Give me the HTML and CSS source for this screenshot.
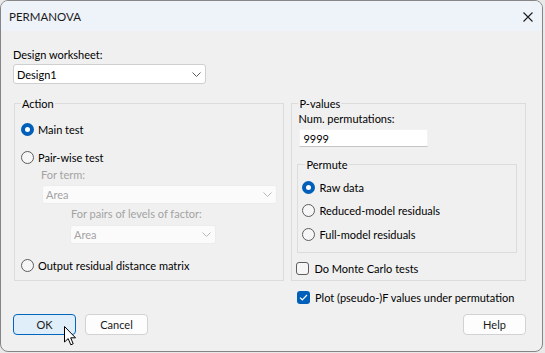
FILE: index.html
```html
<!DOCTYPE html>
<html lang="en">

<head>
  <meta charset="UTF-8">
  <meta name="viewport" content="width=device-width, initial-scale=1.0">
  <title>PERMANOVA</title>
  <link rel="stylesheet" href="styles.css">
</head>

<body>

  <div class="window">
    <div class="titlebar">
      <span class="title">PERMANOVA</span>
      <svg class="close" width="10" height="10" viewBox="0 0 10 10">
        <path d="M0.5 0.5 L9.5 9.5 M9.5 0.5 L0.5 9.5" stroke="#1b1b1b" stroke-width="1.1" fill="none" />
      </svg>
    </div>

    <div class="content">
      <div class="label">Design worksheet:</div>
      <div class="combo worksheet">
        <span>Design1</span>
        <svg width="9" height="5" viewBox="0 0 9 5"><path d="M0.5 0.5 L4.5 4.5 L8.5 0.5" stroke="#5c5c5c" fill="none" /></svg>
      </div>

      <div class="groups">
        <fieldset class="group action">
          <legend>Action</legend>
          <div class="option first"><span class="radio checked"></span>Main test</div>
          <div class="option"><span class="radio"></span>Pair-wise test</div>
          <div class="sub">
            <div class="label disabled">For term:</div>
            <div class="combo off term">
              <span>Area</span>
              <svg width="9" height="5" viewBox="0 0 9 5"><path d="M0.5 0.5 L4.5 4.5 L8.5 0.5" stroke="#b8b8b8" fill="none" /></svg>
            </div>
            <div class="subsub">
              <div class="label disabled">For pairs of levels of factor:</div>
              <div class="combo off pairs">
                <span>Area</span>
                <svg width="9" height="5" viewBox="0 0 9 5"><path d="M0.5 0.5 L4.5 4.5 L8.5 0.5" stroke="#b8b8b8" fill="none" /></svg>
              </div>
            </div>
          </div>
          <div class="option last"><span class="radio"></span>Output residual distance matrix</div>
        </fieldset>

        <fieldset class="group pvalues">
          <legend>P-values</legend>
          <div class="label">Num. permutations:</div>
          <div class="textbox">9999</div>
          <fieldset class="group permute">
            <legend>Permute</legend>
            <div class="option"><span class="radio checked"></span>Raw data</div>
            <div class="option"><span class="radio"></span>Reduced-model residuals</div>
            <div class="option"><span class="radio"></span>Full-model residuals</div>
          </fieldset>
          <div class="option check"><span class="box"></span>Do Monte Carlo tests</div>
        </fieldset>
      </div>

      <div class="option check plot">
        <span class="box checked">
          <svg width="9" height="7" viewBox="0 0 9 7"><path d="M1 3.6 L3.3 5.8 L8 1" stroke="#fff" stroke-width="1.2" fill="none" /></svg>
        </span>
        Plot (pseudo-)F values under permutation
      </div>

      <div class="buttons">
        <button class="btn default">OK</button>
        <button class="btn">Cancel</button>
        <span class="spacer"></span>
        <button class="btn">Help</button>
      </div>
    </div>

    <svg class="cursor" width="13" height="20" viewBox="0 0 13 20">
      <path d="M0.5 0.5 L0.5 16 L4.2 12.6 L6.8 18.8 L9.2 17.8 L6.7 11.8 L11.5 11.8 Z" fill="#fff" stroke="#000" stroke-width="1" stroke-linejoin="round" />
    </svg>
  </div>

</body>

</html>
```

FILE: styles.css
```css
body {
  margin: 0;
  background-color: #e9e9e9;
  font-family: 'Lato', 'Liberation Sans', sans-serif;
  font-size: 11px;
  color: #000;
}

.window {
  position: relative;
  width: 541px;
  height: 350px;
  border: 1px solid #858585;
  border-radius: 8px;
  overflow: hidden;
  background-color: #f0f0f0;
}

.titlebar {
  height: 30px;
  display: flex;
  align-items: center;
  justify-content: space-between;
  padding: 0 9px 0 8px;
  background-color: #eef2f9;
}

.title {
  font-size: 11.5px;
  color: #1a1a1a;
  margin-top: 1px;
}

.close {
  margin-top: 1px;
}

.content {
  padding: 16px 16px 0 12px;
}

.label {
  line-height: 16px;
  height: 16px;
  white-space: nowrap;
}

.disabled {
  color: #a3a3a3;
}

.combo {
  display: flex;
  align-items: center;
  justify-content: space-between;
  box-sizing: border-box;
  height: 20px;
  padding: 0 4px 0 3px;
  border: 1px solid #cfcfcf;
  border-radius: 3px;
  background-color: #fff;
}

.worksheet {
  width: 193px;
  margin-top: 1px;
}

.combo.off {
  background-color: #fbfbfb;
  border-color: #ececec;
  color: #a3a3a3;
  height: 19px;
}

.term {
  width: 235px;
  margin-top: 2px;
  margin-left: 1px;
}

.subsub {
  margin-left: 30px;
  margin-top: 2px;
}

.pairs {
  width: 146px;
  margin-top: 3px;
  margin-left: -1px;
}

.sub {
  margin-left: 20px;
}

.groups {
  display: flex;
  gap: 7px;
  margin-top: 12px;
  margin-left: 1px;
}

.group {
  margin: 0;
  border: 1px solid #dcdcdc;
  padding: 0 6px;
  min-width: 0;
}

legend {
  padding: 0 1px;
  line-height: 15px;
}

.action {
  width: 257px;
  height: 183px;
}

.pvalues {
  width: 221px;
  height: 183px;
}

.option {
  display: flex;
  align-items: center;
  gap: 4px;
  height: 20px;
  white-space: nowrap;
}

.action .first {
  margin-top: 8px;
}

.action .option + .option {
  margin-top: 8px;
}

.action .last {
  margin-top: 11px;
}

.radio {
  box-sizing: border-box;
  width: 13px;
  height: 13px;
  border: 1px solid #5d5d5d;
  border-radius: 50%;
  background-color: #f6f6f6;
  flex-shrink: 0;
}

.radio.checked {
  border: 4px solid #005fb8;
  background-color: #fff;
}

.textbox {
  box-sizing: border-box;
  width: 129px;
  height: 18px;
  margin-top: 2px;
  margin-left: 1px;
  padding: 0 3px;
  line-height: 17px;
  background-color: #fff;
  border: 1px solid #f3f3f3;
  border-bottom-color: #c4c4c4;
}

.permute {
  width: 210px;
  height: 94px;
  margin-top: 10px;
  margin-left: -1px;
  padding: 0 4px;
}

.permute legend {
  margin-left: 3px;
}

.permute .option {
  height: 20px;
  margin-top: 3.5px;
}

.permute .option:first-of-type {
  margin-top: 5px;
}

.box {
  box-sizing: border-box;
  width: 13px;
  height: 13px;
  border: 1px solid #5d5d5d;
  border-radius: 3px;
  background-color: #f6f6f6;
  display: flex;
  align-items: center;
  justify-content: center;
  flex-shrink: 0;
}

.box.checked {
  border: none;
  background-color: #005fb8;
}

.check {
  gap: 5px;
}

.pvalues .check {
  margin-top: 5px;
  margin-left: -2px;
}

.plot {
  margin-top: 6px;
  margin-left: 284px;
}

.buttons {
  display: flex;
  gap: 9px;
  margin-top: 7px;
}

.spacer {
  flex: 1;
}

.btn {
  box-sizing: border-box;
  width: 63px;
  height: 21px;
  padding: 0;
  font-family: inherit;
  font-size: 11px;
  color: #1a1a1a;
  background-color: #fdfdfd;
  border: 1px solid #d2d2d2;
  border-radius: 4px;
}

.btn.default {
  background-color: #e0eef9;
  border-color: #0067c0;
}

.cursor {
  position: absolute;
  left: 63px;
  top: 325px;
}
```
